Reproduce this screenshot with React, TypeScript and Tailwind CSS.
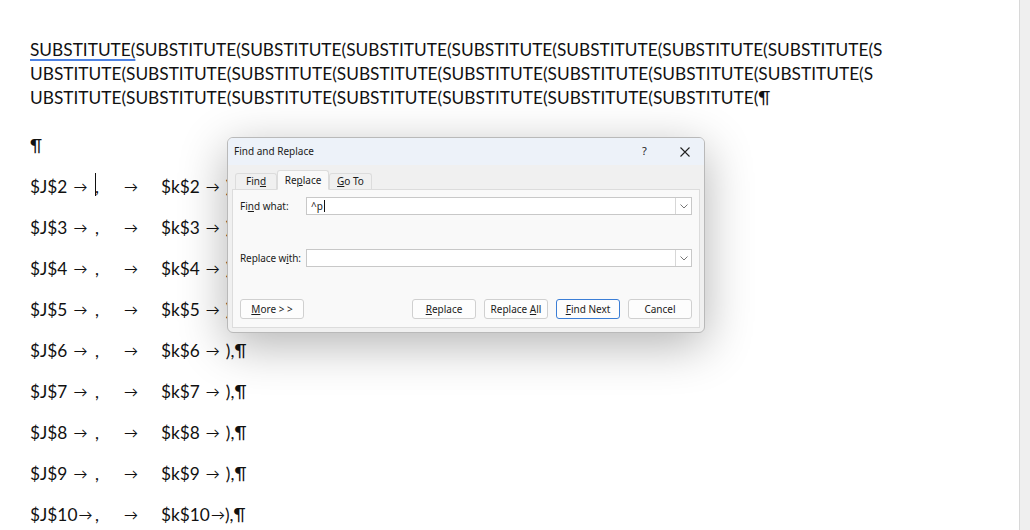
import { ReactNode } from "react";

const doc = "font-['Lato','Open_Sans',sans-serif] text-[17.3px] text-[#111]";
const ui = "font-['Noto_Sans','Open_Sans',sans-serif] text-[10px] text-[#1b1b1b]";

function Tab({ children, active, w }: { children: ReactNode; active?: boolean; w: string }) {
  return (
    <div
      className={
        w +
        (active
          ? " h-[20px] -mb-px flex items-center justify-center bg-[#f9f9f9] border border-[#dcdcdc] border-b-[#f9f9f9] rounded-t-[3px] relative z-10"
          : " h-[16px] flex items-center justify-center bg-[#f0f0f0] border border-[#dcdcdc] border-b-0 rounded-t-[3px]")
      }
    >
      <span>{children}</span>
    </div>
  );
}

function Combo({ value }: { value?: ReactNode }) {
  return (
    <div className="flex-1 h-[18px] flex bg-white border border-[#c8c8c8]">
      <div className="flex-1 flex items-center pl-[4px]">{value}</div>
      <div className="w-[16px] border-l border-[#d7d7d7] flex items-center justify-center">
        <svg width="8" height="5" viewBox="0 0 8 5">
          <path d="M0.5 0.5 L4 4 L7.5 0.5" fill="none" stroke="#777" strokeWidth="1" />
        </svg>
      </div>
    </div>
  );
}

function Btn({ children, primary }: { children: ReactNode; primary?: boolean }) {
  return (
    <div
      className={
        "w-[64px] h-[20px] flex items-center justify-center rounded-[3px] bg-[#fdfdfd] border " +
        (primary ? "border-[#3b7ed6]" : "border-[#d0d0d0]")
      }
    >
      <span>{children}</span>
    </div>
  );
}

function Row({ n }: { n: number }) {
  const wide = n >= 10;
  return (
    <div className="h-[41px] flex items-center whitespace-nowrap">
      <span className="w-[65px] flex items-center">
        <span>$J${n}</span>
        <span className={wide ? "ml-[1px] text-[14px]" : "ml-[6px] text-[14px]"}>→</span>
      </span>
      <span className="w-[66px] flex items-center relative">
        {n === 2 && <span className="absolute left-0 top-[-1px] h-[23px] w-px bg-[#111]" />}
        <span>,</span>
        <span className="ml-[25px] text-[14px]">→</span>
      </span>
      <span className="flex items-center">
        <span>$k${n}</span>
        <span className={wide ? "ml-[1px] text-[14px]" : "ml-[6px] text-[14px]"}>→</span>
        <span className={wide ? "ml-0" : "ml-[6px]"}>),¶</span>
      </span>
    </div>
  );
}

export default function App() {
  const rows = [2, 3, 4, 5, 6, 7, 8, 9, 10];
  return (
    <div className="relative w-[1030px] h-[530px] bg-white overflow-hidden flex">
      <div className={"flex-1 pl-[30px] pt-[38px] " + doc}>
        <div className="leading-[24px] whitespace-nowrap">
          <div>
            <span className="underline decoration-solid decoration-2 decoration-[#4d82e4] underline-offset-[3px]">
              SUBSTITUTE(
            </span>
            SUBSTITUTE(SUBSTITUTE(SUBSTITUTE(SUBSTITUTE(SUBSTITUTE(SUBSTITUTE(SUBSTITUTE(S
          </div>
          <div>UBSTITUTE(SUBSTITUTE(SUBSTITUTE(SUBSTITUTE(SUBSTITUTE(SUBSTITUTE(SUBSTITUTE(SUBSTITUTE(S</div>
          <div>UBSTITUTE(SUBSTITUTE(SUBSTITUTE(SUBSTITUTE(SUBSTITUTE(SUBSTITUTE(SUBSTITUTE(¶</div>
        </div>
        <div className="mt-[15px]">
          <div className="h-[41px] flex items-center">¶</div>
          {rows.map((n) => (
            <Row key={n} n={n} />
          ))}
        </div>
      </div>
      <div className="w-[11px] bg-[#efefef] border-l border-[#d8d8d8]" />

      <div
        className={
          "absolute left-[227px] top-[137px] w-[478px] h-[196px] flex flex-col bg-[#f0f0f0] border border-[#b9b9b9] rounded-[6px] overflow-hidden shadow-[0_12px_48px_rgba(0,0,0,0.3)] " +
          ui
        }
      >
        <div className="h-[27px] shrink-0 flex items-center bg-[#edf2f9] pl-[6px]">
          <span className="flex-1">Find and Replace</span>
          <span className="w-[12px] text-[11px]">?</span>
          <span className="ml-[26px] mr-[14px] flex items-center">
            <svg width="10" height="10" viewBox="0 0 10 10">
              <path d="M0.5 0.5 L9.5 9.5 M9.5 0.5 L0.5 9.5" stroke="#222" strokeWidth="1.1" />
            </svg>
          </span>
        </div>
        <div className="flex items-end pl-[7px] h-[24px] shrink-0">
          <Tab w="w-[42px]">
            Fin<u>d</u>
          </Tab>
          <Tab active w="w-[52px]">
            Re<u>p</u>lace
          </Tab>
          <Tab w="w-[43px]">
            <u>G</u>o To
          </Tab>
        </div>
        <div className="mx-[4px] h-[139px] bg-[#f9f9f9] border border-[#dcdcdc] pl-[7px] pr-[7px] pt-[7px] flex flex-col">
          <div className="flex items-center">
            <span className="w-[66px] shrink-0 whitespace-nowrap">
              Fi<u>n</u>d what:
            </span>
            <Combo
              value={
                <span className="flex items-center">
                  ^p<span className="ml-px h-[12px] w-px bg-[#111]" />
                </span>
              }
            />
          </div>
          <div className="flex items-center mt-[34px]">
            <span className="w-[66px] shrink-0 whitespace-nowrap tracking-[-0.1px]">
              Replace w<u>i</u>th:
            </span>
            <Combo />
          </div>
          <div className="flex items-center mt-[32px]">
            <Btn>
              <u>M</u>ore &gt; &gt;
            </Btn>
            <div className="flex-1" />
            <div className="flex gap-[8px]">
              <Btn>
                <u>R</u>eplace
              </Btn>
              <Btn>
                Replace <u>A</u>ll
              </Btn>
              <Btn primary>
                <u>F</u>ind Next
              </Btn>
              <Btn>Cancel</Btn>
            </div>
          </div>
        </div>
      </div>
    </div>
  );
}
